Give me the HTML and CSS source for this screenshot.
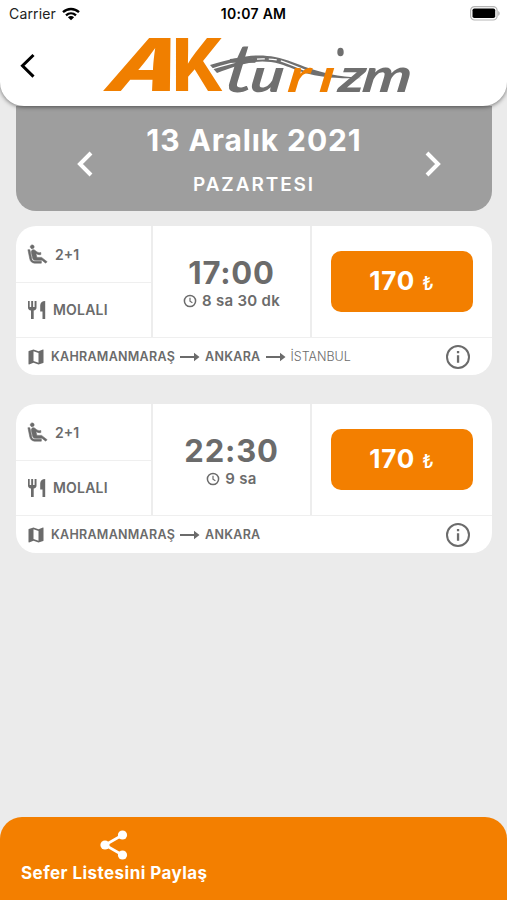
FILE: index.html
```html
<!DOCTYPE html>
<html lang="tr">
  <head>
    <meta charset="UTF-8" />
    <meta name="viewport" content="width=device-width, initial-scale=1.0" />
    <title>AK Turizm</title>
    <link rel="stylesheet" href="styles.css">
  </head>
  <body>
    <!-- shared icons -->
    <svg class="sprite">
      <symbol id="seat" viewBox="0 0 24 24">
        <path stroke="currentColor" stroke-width=".6" d="M5.35 5.64c-.9-.64-1.12-1.88-.49-2.79.63-.9 1.88-1.12 2.79-.49.9.64 1.12 1.88.49 2.79-.64.9-1.88 1.12-2.79.49zM16 19H8.93c-1.48 0-2.74-1.08-2.96-2.54L4 7H2l1.99 9.76C4.37 19.2 6.47 21 8.94 21H16v-2zm.23-4h-4.88l-1.03-4.1c1.58.89 3.28 1.54 5.15 1.22V9.99c-1.63.31-3.44-.27-4.69-1.25L9.14 7.47c-.23-.18-.49-.3-.76-.38-.32-.09-.66-.12-.99-.06h-.02c-1.23.22-2.05 1.39-1.84 2.61l1.35 5.92C7.16 16.98 8.39 18 9.83 18h6.85l3.82 3 1.5-1.5-5.77-4.5z" />
      </symbol>
      <symbol id="food" viewBox="0 0 18 20">
        <path d="M0 1h1.700v6h1.500V1h1.900v6h1.500V1h1.900v6.500c0 1.800-1 2.800-2.800 3.100V19H3V10.600C1 10.300 0 9.300 0 7.500zM17.200 1v18h-2.700v-7.500h-2.300V5.500C12.200 3 14 1 17.200 1z" />
      </symbol>
      <symbol id="map" viewBox="0 0 24 24">
        <path d="M20.500 3l-.16.03L15 5.100 9 3 3.360 4.900c-.21.07-.36.25-.36.48V20.500c0 .28.22.5.5.5l.16-.03L9 18.900l6 2.100 5.640-1.900c.21-.07.36-.25.36-.48V3.500c0-.28-.22-.5-.5-.5zM15 19l-6-2.110V5l6 2.110V19z" />
      </symbol>
      <symbol id="clock" viewBox="0 0 14 14">
        <circle cx="7" cy="7" r="5.600" fill="none" stroke="currentColor" stroke-width="1.500" />
        <path d="M7 3.800V7.200L9.400 8.700" fill="none" stroke="currentColor" stroke-width="1.200" />
      </symbol>
      <symbol id="arrow" viewBox="0 0 20 10">
        <path d="M0 4H14V.8L19.500 5L14 9.200V6H0z" />
      </symbol>
      <symbol id="info" viewBox="0 0 26 26">
        <circle cx="13" cy="13" r="11" fill="none" stroke="currentColor" stroke-width="2" />
        <path d="M11.900 7h2.300v2.300h-2.300zM11.900 11.300h2.300v7.500h-2.300z" />
      </symbol>
    </svg>

    <header>
      <div class="status">
        <span class="carrier">Carrier
          <svg width="18" height="14" viewBox="0 0 18 14">
            <path d="M1 5.200C5.500.9 12.500.9 17 5.200M4 8.400C6.900 5.700 11.100 5.700 14 8.400" fill="none" stroke="#000" stroke-width="2.300" />
            <path d="M9 13.300L5.900 10.200C7.700 8.700 10.300 8.700 12.100 10.200z" />
          </svg>
        </span>
        <span class="time">10:07 AM</span>
        <svg class="battery" width="31" height="15" viewBox="0 0 31 15">
          <rect x=".6" y=".6" width="26.500" height="13.400" rx="4" fill="#fff" stroke="#b5b5b5" stroke-width="1.200" />
          <rect x="2.500" y="2.500" width="22.700" height="9.600" rx="1.800" />
          <path d="M28.200 5v4.800c2-.7 2-4.100 0-4.800z" fill="#b5b5b5" />
        </svg>
      </div>
      <div class="brand">
        <svg class="back" width="16" height="26" viewBox="0 0 16 26">
          <path d="M13.500 2L2.500 12.800L13.500 23.600" fill="none" stroke="#000" stroke-width="3" />
        </svg>
        <svg class="logo" width="316" height="66" viewBox="98 34 316 66">
          <text class="logo-ak" transform="translate(101 92) skewX(-24)" textLength="71" lengthAdjust="spacingAndGlyphs">A</text>
          <text class="logo-ak" x="172" y="92" textLength="52" lengthAdjust="spacingAndGlyphs">K</text>
          <!-- road running behind the letters -->
          <path d="M210 66C238 58 255 54 275 58C300 63 312 76 362 79C312 81 299 71 280 65C258 59 240 65 217 74z" fill="#6f6f6f" />
          <path d="M212 70C240 61 258 58 278 61C292 65 300 70 312 74" fill="none" stroke="#fff" stroke-width="1.300" stroke-dasharray="30 4 8 4 8 4 8 4" />
          <text class="logo-turizm" transform="translate(0 93) scale(1.32 1) skewX(-6)"><tspan class="tall" x="168">t</tspan><tspan x="188.500">u</tspan><tspan class="orange" x="217 241">rı</tspan><tspan x="255.500 273.500">zm</tspan></text>
          <ellipse cx="340.500" cy="53" rx="3.200" ry="4.300" fill="#6f6f6f" />
        </svg>
      </div>
    </header>

    <main>
      <section class="date">
        <svg width="16" height="26" viewBox="0 0 16 26">
          <path d="M14 2L3 13L14 24" />
        </svg>
        <div>
          <h1>13 Aralık 2021</h1>
          <p>PAZARTESI</p>
        </div>
        <svg width="16" height="26" viewBox="0 0 16 26">
          <path d="M2 2L13 13L2 24" />
        </svg>
      </section>

      <article class="trip">
        <div class="features">
          <p><svg class="seat"><use href="#seat" /></svg>2+1</p>
          <p class="break"><svg class="food"><use href="#food" /></svg>MOLALI</p>
        </div>
        <div class="departure">
          <h2>17:00</h2>
          <p><svg class="clock"><use href="#clock" /></svg>8 sa 30 dk</p>
        </div>
        <div class="price">
          <button>170 <span>₺</span></button>
        </div>
        <footer class="route">
          <svg class="map"><use href="#map" /></svg>
          <span>KAHRAMANMARAŞ</span>
          <svg class="arrow"><use href="#arrow" /></svg>
          <span>ANKARA</span>
          <svg class="arrow"><use href="#arrow" /></svg>
          <span class="last">İSTANBUL</span>
          <svg class="info"><use href="#info" /></svg>
        </footer>
      </article>

      <article class="trip">
        <div class="features">
          <p><svg class="seat"><use href="#seat" /></svg>2+1</p>
          <p class="break"><svg class="food"><use href="#food" /></svg>MOLALI</p>
        </div>
        <div class="departure">
          <h2>22:30</h2>
          <p><svg class="clock"><use href="#clock" /></svg>9 sa</p>
        </div>
        <div class="price">
          <button>170 <span>₺</span></button>
        </div>
        <footer class="route">
          <svg class="map"><use href="#map" /></svg>
          <span>KAHRAMANMARAŞ</span>
          <svg class="arrow"><use href="#arrow" /></svg>
          <span>ANKARA</span>
          <svg class="info"><use href="#info" /></svg>
        </footer>
      </article>
    </main>

    <div class="share">
      <div>
        <svg width="28" height="30" viewBox="0 0 28 30">
          <path d="M22.500 5L5 15L22.500 25" fill="none" stroke="#fff" stroke-width="2.600" />
          <circle cx="22.500" cy="5" r="4.600" />
          <circle cx="5" cy="15" r="4.600" />
          <circle cx="22.500" cy="25" r="4.600" />
        </svg>
        <p>Sefer Listesini Paylaş</p>
      </div>
    </div>
  </body>
</html>
```
FILE: styles.css
```css
* {
  box-sizing: border-box;
}
body {
  margin: 0;
  height: 900px;
  display: flex;
  flex-direction: column;
  overflow: hidden;
  background-color: #ebebeb;
  font-family: "Inter", "Liberation Sans", sans-serif;
  color: #6b6b6b;
}
h1,
h2,
p {
  margin: 0;
}
svg {
  flex: none;
  fill: currentColor;
}
.sprite {
  position: absolute;
  width: 0;
  height: 0;
}
header {
  position: relative;
  z-index: 1;
  height: 106px;
  background-color: white;
  border-radius: 0 0 24px 24px;
  box-shadow: 0 1px 4px rgba(0, 0, 0, 0.5);
  color: black;
}
.status {
  display: grid;
  grid-template-columns: 1fr auto 1fr;
  align-items: center;
  height: 27px;
  padding: 0 6px 0 9px;
  font-size: 14px;
}
.carrier {
  display: flex;
  align-items: center;
  gap: 6px;
  color: #222;
  letter-spacing: 0.15px;
}
.carrier svg {
  color: black;
}
.time {
  margin-right: 3px;
  font-weight: 600;
  letter-spacing: 0.3px;
}
.battery {
  justify-self: end;
}
.brand {
  display: flex;
  align-items: center;
  padding: 6px 0 0 20px;
}
.logo {
  margin-left: 62px;
  overflow: visible;
}
.logo-ak {
  font-family: "Inter", sans-serif;
  font-size: 73px;
  font-weight: 800;
  fill: #f07f00;
}
.logo-turizm {
  font-family: "Lato", sans-serif;
  font-size: 47px;
  font-style: italic;
  font-weight: 700;
  fill: #6f6f6f;
}
.logo-turizm .tall {
  font-size: 68px;
  font-weight: 400;
}
.logo-turizm .orange {
  fill: #f07f00;
}
main {
  flex: 1;
  padding: 0 15px 0 16px;
}
.date {
  display: flex;
  justify-content: space-between;
  height: 105px;
  padding: 0 51px 0 61px;
  background-color: #9e9e9e;
  border-radius: 0 0 20px 20px;
  color: white;
  text-align: center;
}
.date div {
  padding-right: 10px;
}
.date svg {
  margin-top: 45px;
  fill: none;
  stroke: white;
  stroke-width: 4;
}
.date h1 {
  margin-top: 15px;
  font-size: 30px;
  line-height: 38px;
  letter-spacing: 0.9px;
}
.date p {
  margin-top: 14px;
  font-size: 19px;
  font-weight: 600;
  line-height: 24px;
  letter-spacing: 1.9px;
}
.trip {
  display: grid;
  grid-template-columns: 137px 159px 1fr;
  grid-template-rows: 111px 38px;
  height: 149px;
  margin-top: 15px;
  background-color: white;
  border-radius: 20px;
}
.trip + .trip {
  margin-top: 29px;
}
.features,
.departure {
  border-right: 2px solid #ededed;
}
.features p {
  display: flex;
  align-items: center;
  height: 56px;
  padding-left: 10px;
  font-size: 14px;
  font-weight: 600;
}
.features .break {
  height: 54px;
  padding-left: 12px;
  border-top: 1px solid #efefef;
  letter-spacing: 0.2px;
}
.seat {
  width: 23px;
  height: 23px;
  margin-right: 6px;
}
.food {
  width: 18px;
  height: 20px;
  margin-right: 7px;
}
.departure {
  padding-top: 28px;
  text-align: center;
}
.departure h2 {
  font-size: 31px;
  line-height: 38px;
  letter-spacing: 0.8px;
}
.departure p {
  display: flex;
  justify-content: center;
  align-items: center;
  gap: 5px;
  font-size: 15px;
  font-weight: 600;
  line-height: 17px;
  letter-spacing: 0.3px;
}
.clock {
  width: 14px;
  height: 14px;
}
.price {
  padding: 25px 19px 0 19px;
}
.price button {
  width: 142px;
  height: 61px;
  padding: 0 0 2px;
  border: none;
  border-radius: 10px;
  background-color: #f37f00;
  color: white;
  font-family: inherit;
  font-size: 26px;
  font-weight: 700;
  letter-spacing: 0.9px;
}
.price span {
  font-size: 19px;
  font-weight: 500;
}
.route {
  grid-column: 1 / 4;
  display: flex;
  align-items: center;
  padding: 0 21px 0 10px;
  border-top: 1px solid #efefef;
  font-size: 12.500px;
  font-weight: 600;
  letter-spacing: 0.28px;
}
.map {
  width: 20px;
  height: 20px;
  margin-right: 5px;
}
.arrow {
  width: 20px;
  height: 10px;
  margin: 0 5px;
}
.last {
  font-weight: 300;
  letter-spacing: 0;
}
.info {
  width: 26px;
  height: 26px;
  margin-left: auto;
}
.share {
  display: flex;
  height: 83px;
  padding: 13px 21px;
  background-color: #f37f00;
  border-radius: 22px 22px 0 0;
  color: white;
  text-align: center;
}
.share svg {
  display: block;
  margin: 0 auto;
}
.share p {
  font-size: 17px;
  font-weight: 700;
  line-height: 26px;
  letter-spacing: 0.45px;
}
```
